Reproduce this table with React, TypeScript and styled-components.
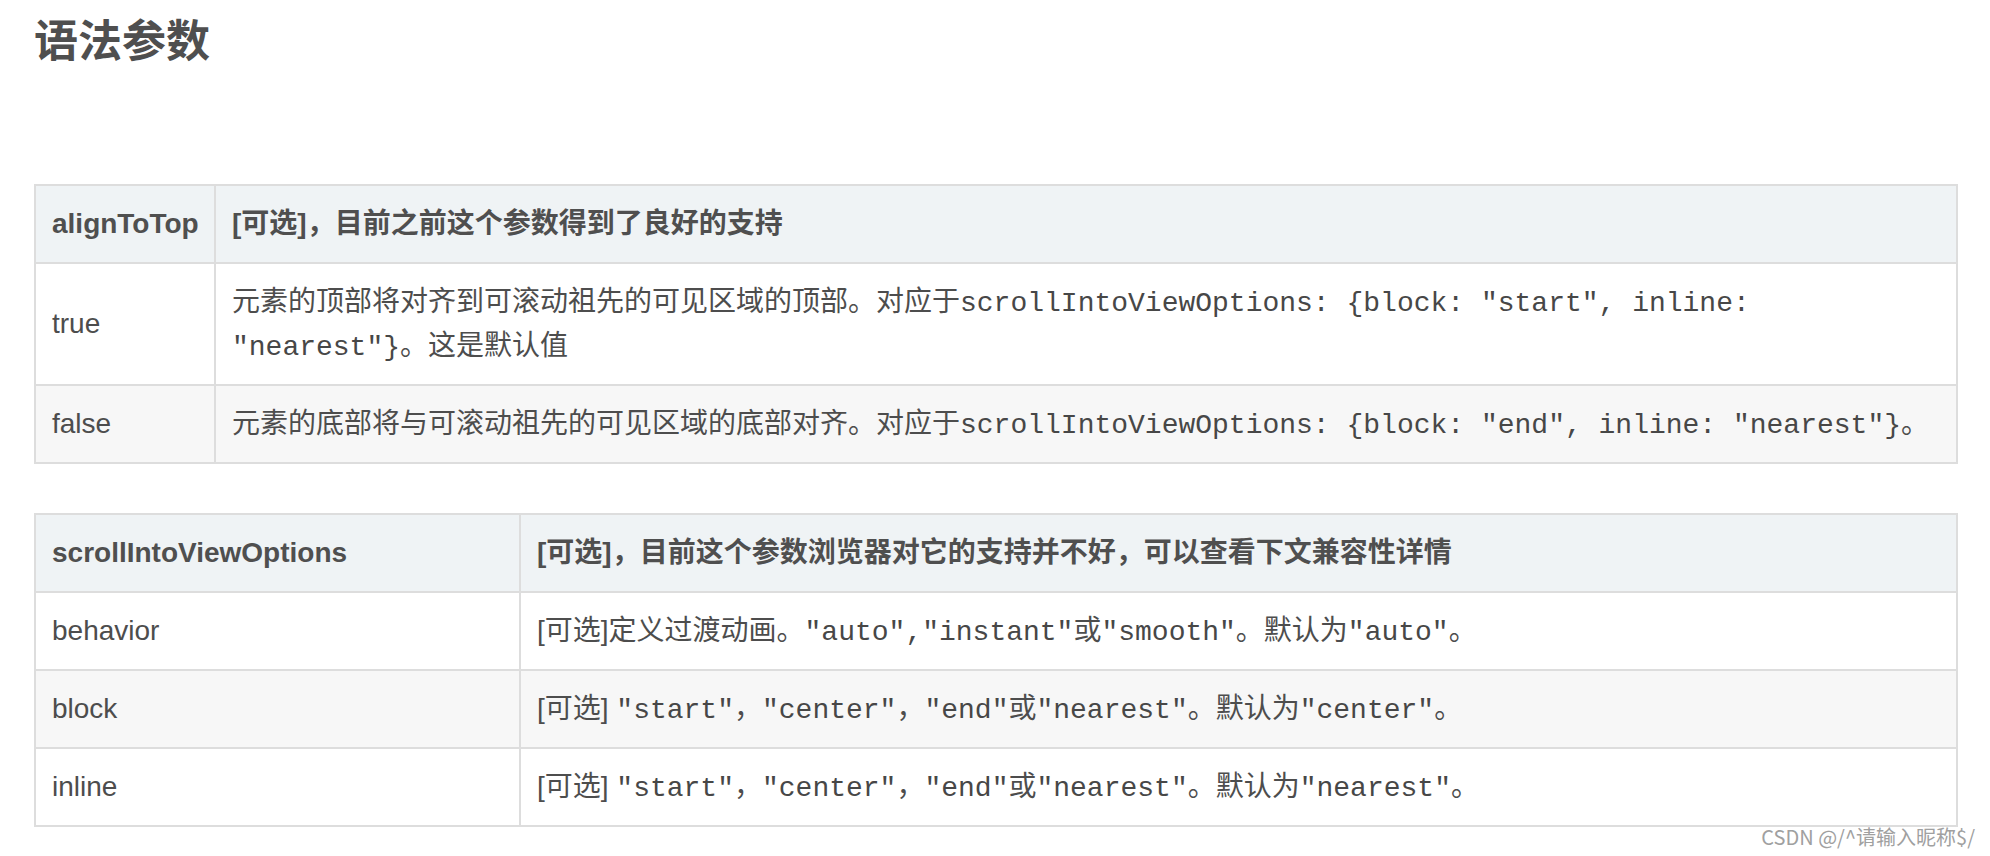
import React from "react";
import styled, { createGlobalStyle } from "styled-components";

const Global = createGlobalStyle`
  html, body { margin: 0; padding: 0; background: #ffffff; }
  body { font-family: "Liberation Sans", "Noto Sans CJK SC", sans-serif; color: #4d4d4d; }
`;

const Page = styled.div`
  position: relative;
  width: 1990px;
  height: 856px;
  box-sizing: border-box;
  padding: 10px 32px 0 34px;
  display: flex;
  flex-direction: column;
`;

const Title = styled.h2`
  margin: 0;
  font-family: "Noto Sans CJK SC", sans-serif;
  font-weight: 700;
  font-size: 44px;
  line-height: 56px;
  color: #4f4f4f;
  letter-spacing: 0;
`;

const Tables = styled.div`
  display: flex;
  flex-direction: column;
  gap: 49px;
  margin-top: 118px;
`;

const Table = styled.table`
  width: 1924px;
  border-collapse: separate;
  border-spacing: 0;
  table-layout: fixed;
  border-top: 2px solid #dddddd;
  border-left: 2px solid #dddddd;
  font-size: 28px;
  line-height: 44px;
`;

const Col = styled.col<{ $w?: number }>`
  width: ${(p) => (p.$w ? `${p.$w}px` : "auto")};
`;

const Row = styled.tr<{ $shade?: "head" | "even" | "odd" }>`
  background: ${(p) =>
    p.$shade === "head" ? "#eff3f5" : p.$shade === "even" ? "#f7f7f7" : "#ffffff"};
`;

const Th = styled.th`
  text-align: left;
  font-weight: 700;
  color: #4f4f4f;
  padding: 16px 16px;
  border-right: 2px solid #dddddd;
  border-bottom: 2px solid #dddddd;
  vertical-align: middle;
`;

const Td = styled.td`
  text-align: left;
  color: #4d4d4d;
  padding: 16px 16px;
  border-right: 2px solid #dddddd;
  border-bottom: 2px solid #dddddd;
  vertical-align: middle;
`;

const Code = styled.code`
  font-family: "Liberation Mono", "Noto Sans CJK SC", monospace;
  font-size: 28px;
  line-height: 1;
  color: #474747;
`;

const Watermark = styled.div`
  position: absolute;
  right: 15px;
  bottom: 7px;
  font-family: "Noto Sans CJK SC", sans-serif;
  font-size: 20px;
  line-height: 24px;
  color: #a0a0a0;
  text-shadow: 0 0 1px rgba(255, 255, 255, 0.8);
`;

export default function App() {
  return (
    <>
      <Global />
      <Page>
        <Title>语法参数</Title>
        <Tables>
          <Table>
            <colgroup>
              <Col $w={180} />
              <Col />
            </colgroup>
            <tbody>
              <Row $shade="head">
                <Th>alignToTop</Th>
                <Th>[可选]，目前之前这个参数得到了良好的支持</Th>
              </Row>
              <Row $shade="odd">
                <Td>true</Td>
                <Td>
                  元素的顶部将对齐到可滚动祖先的可见区域的顶部。对应于
                  <Code>scrollIntoViewOptions: {'{'}block: "start", inline:</Code>
                  <br />
                  <Code>"nearest"{'}'}</Code>。这是默认值
                </Td>
              </Row>
              <Row $shade="even">
                <Td>false</Td>
                <Td>
                  元素的底部将与可滚动祖先的可见区域的底部对齐。对应于
                  <Code>scrollIntoViewOptions: {'{'}block: "end", inline: "nearest"{'}'}</Code>。
                </Td>
              </Row>
            </tbody>
          </Table>
          <Table>
            <colgroup>
              <Col $w={485} />
              <Col />
            </colgroup>
            <tbody>
              <Row $shade="head">
                <Th>scrollIntoViewOptions</Th>
                <Th>[可选]，目前这个参数浏览器对它的支持并不好，可以查看下文兼容性详情</Th>
              </Row>
              <Row $shade="odd">
                <Td>behavior</Td>
                <Td>
                  [可选]定义过渡动画。<Code>"auto","instant"</Code>或<Code>"smooth"</Code>。默认为<Code>"auto"</Code>。
                </Td>
              </Row>
              <Row $shade="even">
                <Td>block</Td>
                <Td>
                  [可选] <Code>"start"</Code>，<Code>"center"</Code>，<Code>"end"</Code>或<Code>"nearest"</Code>。默认为<Code>"center"</Code>。
                </Td>
              </Row>
              <Row $shade="odd">
                <Td>inline</Td>
                <Td>
                  [可选] <Code>"start"</Code>，<Code>"center"</Code>，<Code>"end"</Code>或<Code>"nearest"</Code>。默认为<Code>"nearest"</Code>。
                </Td>
              </Row>
            </tbody>
          </Table>
        </Tables>
        <Watermark>CSDN @/^请输入昵称$/</Watermark>
      </Page>
    </>
  );
}
